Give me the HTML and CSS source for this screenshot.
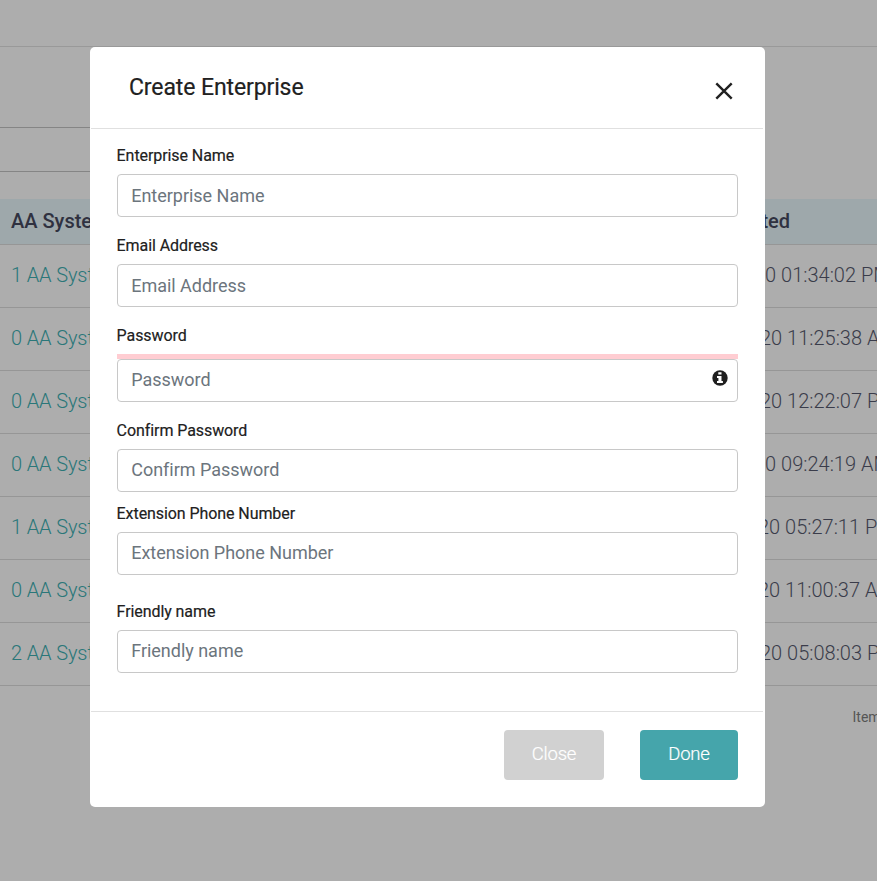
FILE: index.html
```
<!DOCTYPE html>
<html lang="en">
<head>
<meta charset="utf-8">
<title>Create Enterprise</title>
<link rel="stylesheet" href="styles.css">
</head>
<body>
<div class="page">
  <div class="topbar"></div>
  <div class="space"></div>
  <div class="search"></div>
  <div class="table">
    <div class="row head"><span>AA Systems</span><span class="date created">Created</span></div>
    <div class="row"><span class="link">1 AA Systems</span><span class="date d1">20 01:34:02 PM</span></div>
    <div class="row"><span class="link">0 AA Systems</span><span class="date d2">20 11:25:38 AM</span></div>
    <div class="row"><span class="link">0 AA Systems</span><span class="date d2">20 12:22:07 PM</span></div>
    <div class="row"><span class="link">0 AA Systems</span><span class="date d1">20 09:24:19 AM</span></div>
    <div class="row"><span class="link">1 AA Systems</span><span class="date d3">20 05:27:11 PM</span></div>
    <div class="row"><span class="link">0 AA Systems</span><span class="date d3">20 11:00:37 AM</span></div>
    <div class="row"><span class="link">2 AA Systems</span><span class="date d4">20 05:08:03 PM</span></div>
  </div>
  <div class="pager">Items per page</div>
</div>
<div class="overlay">
  <form class="modal">
    <header class="modal-header">
      <h1>Create Enterprise</h1>
      <button class="x" type="button" aria-label="Close"><svg width="18" height="18" viewBox="0 0 18 18"><path d="M1.3 1.3 16.7 16.7M16.7 1.3 1.3 16.7" stroke="#212121" stroke-width="2.4" fill="none"/></svg></button>
    </header>
    <div class="modal-body">
      <label class="field">Enterprise Name<input type="text" placeholder="Enterprise Name"></label>
      <label class="field">Email Address<input type="text" placeholder="Email Address"></label>
      <label class="field">Password
        <span class="strength"></span>
        <span class="control"><input class="raised" type="password" placeholder="Password"><svg class="info" width="16" height="16" viewBox="0 0 16 16"><circle cx="8" cy="8" r="7.7" fill="#1f1f1f"/><path d="M6.3 2.3h3.2v2.3H6.3zM5 6h4.5v5.1h1.4v2H5v-2h1.4V8H5z" fill="#fff"/></svg></span>
      </label>
      <label class="field tight">Confirm Password<input class="raised" type="password" placeholder="Confirm Password"></label>
      <label class="field loose">Extension Phone Number<input class="raised" type="text" placeholder="Extension Phone Number"></label>
      <label class="field">Friendly name<input class="raised" type="text" placeholder="Friendly name"></label>
    </div>
    <footer class="modal-footer">
      <button class="btn close" type="button">Close</button>
      <button class="btn done" type="button">Done</button>
    </footer>
  </form>
</div>
</body>
</html>
```
FILE: styles.css
```
* { box-sizing: border-box; }
body { margin: 0; height: 881px; overflow: hidden; background: #adadad; font-family: Roboto, sans-serif; color: #212121; }
.page { width: 877px; height: 881px; overflow: hidden; }
.topbar { height: 47px; border-bottom: 1px solid #999; }
.space { height: 80px; }
.search { height: 45px; border: solid #858585; border-width: 1px 0; width: 400px; }
.table { margin-top: 27px; font-size: 20px; font-weight: 300; color: #3a3c4a; }
.row { display: grid; grid-template-columns: 742px 1fr; height: 63px; padding: 0 0 2px 11px; align-items: center; border-bottom: 1px solid #969696; white-space: nowrap; line-height: 24px; }
.row.head { height: 46px; background: #9ea8ab; font-weight: 500; color: #2f3140; }
.link { color: #2a7779; letter-spacing: -0.12px; }
.created { margin-left: -33px; }
.d1 { margin-left: 1px; }
.d2 { margin-left: 7px; }
.d3 { margin-left: 5px; }
.d4 { margin-left: 7px; }
.pager { margin: 22px 0 0 852.5px; font-size: 14px; line-height: 18px; white-space: nowrap; color: #555; }

.overlay { position: absolute; inset: 0; padding: 47px 0 0 90px; }
.modal { width: 675px; height: 760px; background: #fff; border-radius: 5px; padding: 0 2px 0 1px; }
.modal-header { height: 82px; border-bottom: 1px solid #e0e0e0; display: flex; justify-content: space-between; padding: 25px 28.8px 0 38px; }
h1 { margin: 0; font-size: 23px; font-weight: 400; line-height: 32px; letter-spacing: -0.11px; -webkit-text-stroke: 0.2px #212121; }
.x { margin-top: 9px; width: 20px; height: 20px; border: 0; padding: 1px; background: none; }
.x svg { display: block; }
.modal-body { height: 583px; border-bottom: 1px solid #e0e0e0; padding: 15px 25px 0 26px; }
.field { display: block; margin-bottom: 17px; font-size: 16px; font-weight: 400; line-height: 24px; letter-spacing: -0.08px; text-indent: -0.4px; -webkit-text-stroke: 0.18px #212121; }
.field.tight { margin-bottom: 10px; }
.field.loose { margin-bottom: 25px; }
input { display: block; width: 100%; height: 43px; margin-top: 6px; padding: 0 13.2px; border: 1px solid #c8c8c8; border-radius: 4px; background: #fff; font: 400 18px Roboto, sans-serif; letter-spacing: -0.02px; text-indent: 0; -webkit-text-stroke: 0; outline: 0; }
input.raised { padding-bottom: 2px; }
input::placeholder { color: #6c757d; opacity: 1; }
.strength { display: block; height: 5px; margin-top: 6px; background: #ffcdd2; }
.control { display: block; position: relative; }
.control input { margin-top: 0; }
.info { position: absolute; right: 10.5px; top: 10.6px; }
.modal-footer { display: flex; justify-content: flex-end; gap: 36px; padding: 18px 25px 0; }
.btn { height: 50px; border: 0; border-radius: 4px; color: #fff; font: 300 18.5px Roboto, sans-serif; letter-spacing: -0.2px; -webkit-text-stroke: 0.2px #fff; padding: 0 0 3px; }
.close { width: 100px; background: #d1d1d1; }
.done { width: 98px; background: #45a5ab; }
```
